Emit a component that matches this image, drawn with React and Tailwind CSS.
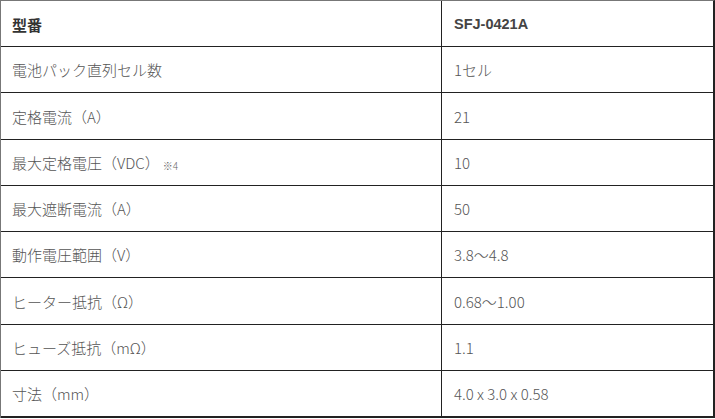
import React from "react";

const rows = [
  { k: "電池パック直列セル数", v: "1セル", h: "h-[46px]" },
  { k: "定格電流（A）", v: "21", h: "h-[47px]" },
  { k: "最大定格電圧（VDC）", note: "※4", v: "10", h: "h-[46px]" },
  { k: "最大遮断電流（A）", v: "50", h: "h-[46px]" },
  { k: "動作電圧範囲（V）", v: "3.8〜4.8", h: "h-[46px]" },
  { k: "ヒーター抵抗（Ω）", v: "0.68〜1.00", h: "h-[47px]" },
  { k: "ヒューズ抵抗（mΩ）", v: "1.1", h: "h-[46px]" },
  { k: "寸法（mm）", v: "4.0 x 3.0 x 0.58", h: "h-[47px]" },
];

const font = { fontFamily: '"Noto Sans CJK JP", "Noto Sans", sans-serif' };

export default function App() {
  return (
    <div className="w-[715px] h-[419px] bg-white" style={font}>
      <div className="w-[715px] border-t border-l border-t-[#777] border-l-[#777] border-r-2 border-r-[#222]">
        <div className="flex h-[46px] border-b border-[#222]">
          <div className="w-[441px] border-r border-[#222] flex items-center pl-[11px] pt-[3px] text-[15px] font-bold text-[#333]">
            型番
          </div>
          <div
            className="flex-1 flex items-center pl-[12px] pt-[3px] text-[14.5px] font-bold text-[#444]"
            style={{ fontFamily: '"Liberation Sans", Arial, sans-serif' }}
          >
            SFJ-0421A
          </div>
        </div>
        {rows.map((r, i) => (
          <div
            key={i}
            className={`flex ${r.h} ${i === rows.length - 1 ? "border-b-2" : "border-b"} border-[#222]`}
          >
            <div className="w-[441px] border-r border-[#222] flex items-center pl-[11px] pt-[2px] text-[15px] text-[#555] font-light">
              <span>{r.k}</span>
              {r.note && <span className="ml-[3px] mt-[3px] text-[10px] text-[#666]">{r.note}</span>}
            </div>
            <div className="flex-1 flex items-center pl-[12px] pt-[2px] text-[15px] text-[#555] font-light">
              {r.v}
            </div>
          </div>
        ))}
      </div>
    </div>
  );
}
